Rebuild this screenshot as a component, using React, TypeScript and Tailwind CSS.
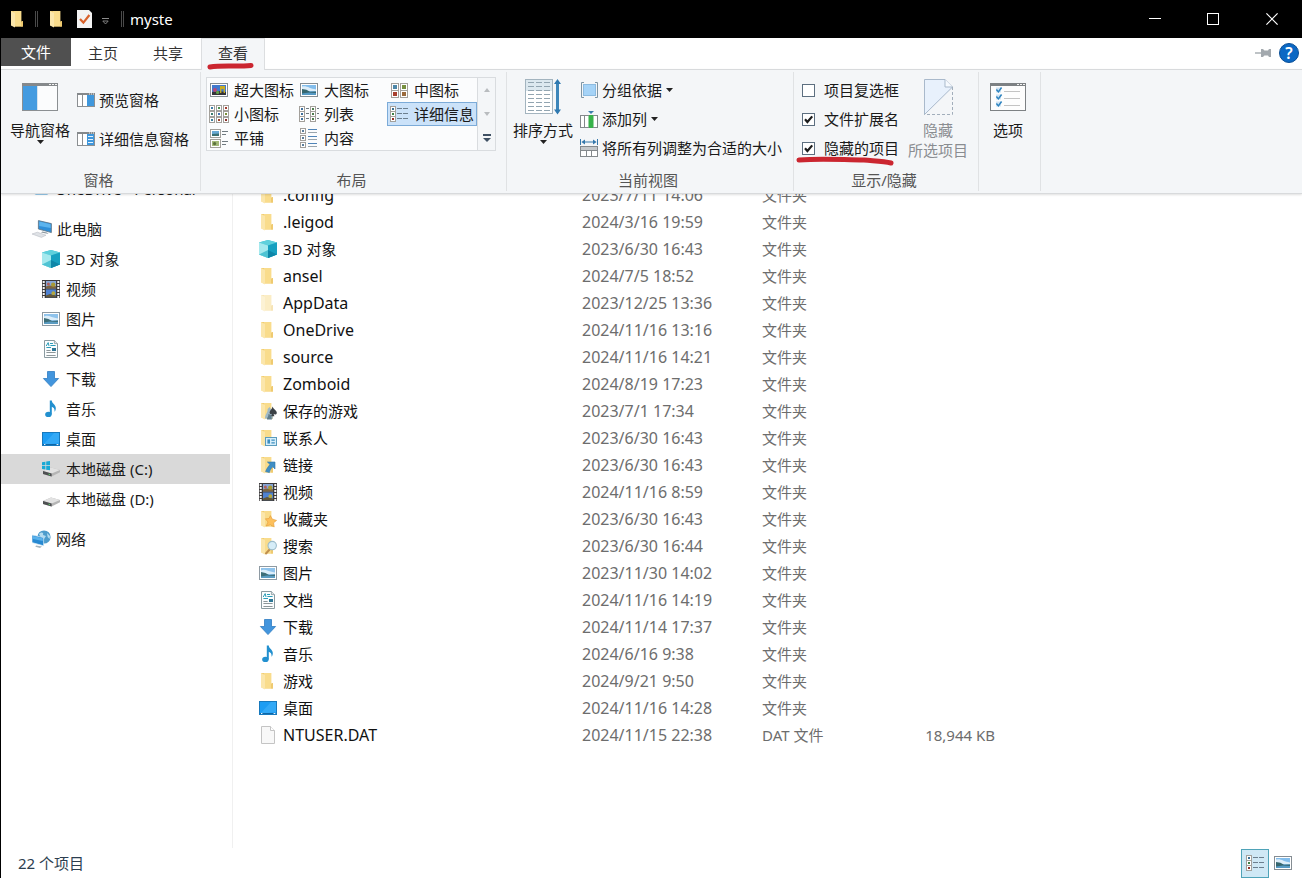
import type { ReactNode } from "react";

type IconProps = { className?: string };

const Svg = ({ w = 18, h = 18, box, className = "", children }: { w?: number; h?: number; box?: string; className?: string; children: ReactNode }) => (
  <svg aria-hidden="true" width={w} height={h} viewBox={box ?? `0 0 ${w} ${h}`} className={`shrink-0 ${className}`}>
    {children}
  </svg>
);

/* ---------- folder and file icons ---------- */

const FolderShape = () => (
  <>
    <path d="M2 1H12V12.5L14 11V16.4H5L2 15Z" fill="#f1cd72" />
    <path d="M5 1H12.4V16.4H5Z" fill="#f9dc8c" />
    <path d="M2 1L6 3V17.6L2 15.4Z" fill="#fbe6ab" />
    <path d="M12 11.5L14 11V16.4H12Z" fill="#efca70" />
  </>
);

const FolderIcon = ({ className }: IconProps) => (
  <Svg className={className}><FolderShape /></Svg>
);

const SavedGamesIcon = () => (
  <Svg>
    <FolderShape />
    <path d="M6 16.6C6 12 9 11 8.6 7L10.6 5L13 9C12.4 11 14 13 14 16.6Z" fill="#9fb9c5" />
    <path d="M8 17.4C8 15 9.6 15 9.4 12L12 13L13 17.4Z" fill="#5f7c8b" />
    <path d="M13.6 4.6C14 7 18 8.6 17.8 11C17.6 12.8 15.4 13 14.6 11.8L15.4 14.2H12L13 11.8C12 12.6 10.6 12 10.6 10.6C10.6 8.6 13.2 7 13.6 4.6Z" fill="#3b4146" />
  </Svg>
);

const ContactsIcon = () => (
  <Svg>
    <FolderShape />
    <rect x="6.5" y="8.5" width="11" height="8" fill="#d6eefa" stroke="#5b9cbd" />
    <rect x="8.4" y="10.4" width="2.6" height="4.2" fill="#3f8fc0" />
    <path d="M12.4 11.2H15.8M12.4 13.8H15.8" stroke="#3f8fc0" strokeWidth="1.2" />
  </Svg>
);

const LinksIcon = () => (
  <Svg>
    <FolderShape />
    <path d="M8.4 6H16V13L13.8 10.8C12 12.4 11 14 10.4 16.6L6.6 15.6C7.6 12.8 9.2 10.4 11 8.6Z" fill="#3f8ec4" stroke="#2d77aa" strokeWidth=".6" />
  </Svg>
);

const FavoritesIcon = () => (
  <Svg>
    <FolderShape />
    <path d="M11.4 5.6L13.2 9L17.6 10.4L14.6 12.8L15.2 17L11.4 14.8L7.2 16L9 12L6.4 8.8L10 8.6Z" fill="#fdc05c" stroke="#e39a38" strokeWidth=".6" />
  </Svg>
);

const SearchFolderIcon = () => (
  <Svg>
    <FolderShape />
    <path d="M11 12L7 16.5" stroke="#c08f4d" strokeWidth="2" strokeLinecap="round" />
    <circle cx="13.2" cy="8.6" r="4.2" fill="#d6edf8" stroke="#9bbccb" strokeWidth="1.1" />
  </Svg>
);

const CubeIcon = () => (
  <Svg>
    <path d="M9 0L18 2.4V14.6L9 18L0 14.6V2.4Z" fill="#36bcd0" />
    <path d="M0 2.4L9 0L18 2.4L9 5.6Z" fill="#5fd0dc" />
    <path d="M0 2.4L9 5.6V18L0 14.6Z" fill="#a5e9ee" />
    <path d="M0 14.6L9 10V18Z" fill="#4fc3d3" />
    <path d="M9 5.6L18 2.4V14.6L9 18Z" fill="#17a0c0" />
    <path d="M9 10L18 14.6L9 18Z" fill="#0f86a8" />
  </Svg>
);

const FilmIcon = () => (
  <Svg>
    <rect width="18" height="18" fill="#3c3a3c" />
    <rect x="4" y="1" width="10" height="7.4" fill="#86a5d6" />
    <rect x="4" y="9.4" width="10" height="7.8" fill="#4f82d2" />
    <path d="M4 6.4L7 5.4L14 6.2V8.4H4Z" fill="#7d6540" />
    <circle cx="11.2" cy="4.6" r="2.2" fill="#a99b35" />
    <circle cx="6.4" cy="4" r="1.5" fill="#b3605a" />
    <path d="M4 15.4L8 14L14 15.4V17.2H4Z" fill="#61573a" />
    <circle cx="11.4" cy="13.2" r="1.9" fill="#b5a83e" />
    <path d="M1.7 1V18M16.3 1V18" stroke="#f5f5f5" strokeWidth="2" strokeDasharray="2 1" />
  </Svg>
);

const PictureIcon = () => (
  <Svg>
    <rect x=".5" y="2.5" width="17" height="13" fill="#fff" stroke="#8e9aa3" />
    <rect x="2" y="4" width="14" height="10" fill="#8fc3ec" />
    <path d="M2 6.4C6 4.4 10 8 16 8.4V10H2Z" fill="#dceefa" />
    <path d="M2 8L6.4 9L10 11L16 10.4V14H2Z" fill="#3d6e78" />
    <path d="M2 12.6L8 11.6L16 12V14H2Z" fill="#5b9cc2" />
  </Svg>
);

const DocumentIcon = () => (
  <Svg>
    <path d="M2.5 .5H12.4L15.5 3.6V17.5H2.5Z" fill="#fbfdfe" stroke="#8a9aa0" />
    <path d="M12.4 .5V3.6H15.5" fill="#dfe5e8" stroke="#8a9aa0" strokeWidth=".8" />
    <path d="M4.2 6L6.2 2.6L7 6M8 3.5H11M8.4 5.5H13.6M4.4 7.5H9" stroke="#2b9db8" fill="none" />
    <path d="M4.4 10.5H8.6M4.4 12.5H13.6M4.4 15.5H13.6" stroke="#8d9699" />
    <rect x="10" y="8" width="4" height="3" fill="#2f7796" />
  </Svg>
);

const DownloadIcon = () => (
  <Svg>
    <path d="M5.5 1.5H12.5V8.5H16.6L9 16.6L1.4 8.5H5.5Z" fill="#4295dd" stroke="#2f7cc1" strokeWidth=".8" />
  </Svg>
);

const MusicIcon = () => (
  <Svg>
    <ellipse cx="6.4" cy="14.4" rx="3.2" ry="2.6" fill="#2290cf" />
    <path d="M7.8 0.6H9.8C10 4 14.2 4.6 13.8 8.8C13.6 10.2 13.2 11 12.6 11.8C12.8 8.6 11.6 7.6 9.8 6.8V14.4H7.8Z" fill="#2290cf" />
  </Svg>
);

const DesktopIcon = () => (
  <Svg>
    <rect x=".5" y="2.5" width="17" height="13" fill="#1d9df3" stroke="#1779bd" />
    <path d="M1 15L12 3H17V13Z" fill="#42b1f8" opacity=".6" />
    <path d="M1 14.5H17" stroke="#0e66a5" />
    <path d="M2 14.5H3.4M14.6 14.5H16.4" stroke="#e3f3ff" />
  </Svg>
);

const FileIcon = () => (
  <Svg>
    <path d="M2.5 .5H11.5L15.5 4.5V17.5H2.5Z" fill="#f8f8f8" stroke="#c4c4c4" />
    <path d="M11.5 .5V4.5H15.5" fill="#fff" stroke="#c4c4c4" />
  </Svg>
);

const ComputerIcon = () => (
  <Svg w={20}>
    <path d="M6.4 .6L19.4 3.6V12.6L6.4 9Z" fill="#2f8fd8" stroke="#5d7180" strokeWidth=".8" />
    <path d="M7.2 1.6L18.6 4.2V8L7.2 6Z" fill="#5cb4ee" />
    <path d="M10.4 11.4L15 12.6L16.6 14L9 12.6Z" fill="#8f9aa2" />
    <path d="M0 14L5.4 12.2L14 15.2L9.4 17.4Z" fill="#dfe2e6" stroke="#b0b5bc" strokeWidth=".5" />
  </Svg>
);

const DriveShape = () => (
  <>
    <path d="M1 11L9 7.6L18 10V12.2L9.6 16.6L1 14Z" fill="#b5b5b5" />
    <path d="M1 11L9 7.6L18 10L9.6 13.4Z" fill="#e2e2e2" />
    <path d="M1 11L9.6 13.4V16.6L1 14Z" fill="#4e5052" />
    <path d="M6.6 14.2L8 14.6" stroke="#5bd66b" />
  </>
);

const DriveIcon = () => <Svg><DriveShape /></Svg>;

const SystemDriveIcon = () => (
  <Svg>
    <DriveShape />
    <path d="M0 2.2L3.4 1.7V5.2H0ZM4.2 1.6L8 1V5.2H4.2ZM0 6H3.4V9.6L0 9.1ZM4.2 6H8V10.2L4.2 9.7Z" fill="#19a9d5" />
  </Svg>
);

const NetworkIcon = () => (
  <Svg w={19}>
    <circle cx="12" cy="7" r="6.6" fill="#4d9ccc" />
    <path d="M7 4C10 1 12 3 11 5L14 6L12 9L9 8ZM15 3L18 6L17.6 9L15.6 7Z" fill="#b4dcf0" />
    <path d="M0 5L11.6 7.6V15.8L0 12.6Z" fill="#2789d2" stroke="#d9edf8" strokeWidth=".7" />
    <path d="M1 6L10.8 8.2V11L1 9Z" fill="#59b2ec" />
    <path d="M4 15.4L10 16.6L8 18L3.4 16.8Z" fill="#a6b5bd" />
  </Svg>
);

const CloudIcon = () => (
  <Svg>
    <path d="M4 14.5A4 4 0 0 1 4.4 6.6A5.4 5.4 0 0 1 14.4 6.8A3.9 3.9 0 0 1 15 14.5Z" fill="#2f93d6" />
  </Svg>
);

/* ---------- ribbon icons ---------- */

const NavPaneIcon = () => (
  <Svg w={36} h={28}>
    <rect x=".5" y=".5" width="35" height="27" fill="#fbfcfd" stroke="#8b8f92" />
    <rect width="36" height="3" fill="#85898c" />
    <path d="M27 1.5H29M30 1.5H32M33 1.5H35" stroke="#f4f4f4" />
    <rect x="1" y="3" width="14" height="24" fill="#449be0" />
    <path d="M15.5 3V27" stroke="#d7e4ee" />
  </Svg>
);

const PreviewPaneIcon = ({ lines = false }: { lines?: boolean }) => (
  <Svg w={18} h={14}>
    <rect x=".5" y=".5" width="17" height="13" fill="#fff" stroke="#8b8f92" />
    <rect width="18" height="2" fill="#85898c" />
    <path d="M12 1H13M14 1H15M16 1H17" stroke="#f4f4f4" />
    <path d="M5.5 2V13" stroke="#8b8f92" />
    <rect x="10" y="2" width="7" height="11" fill="#3f97dc" />
    {lines && <path d="M11 4.5H16M11 7.5H16M11 10.5H16" stroke="#e6f3fd" />}
  </Svg>
);

const ExtraLargeIcon = () => (
  <Svg w={18} h={14}>
    <rect x=".5" y=".5" width="17" height="13" fill="#fff" stroke="#858d93" />
    <rect x="2" y="2" width="14" height="10" fill="#4179cd" />
    <path d="M2 9L8 8L16 9V12H2Z" fill="#34343a" />
    <path d="M10 3H15V10H13.6V6H11.4V10H10Z" fill="#c9ad25" />
    <circle cx="5" cy="7" r="2" fill="#b64a78" />
    <circle cx="7.6" cy="9.4" r="1.6" fill="#61a349" />
  </Svg>
);

const LargeIcon = () => (
  <Svg w={18} h={14}>
    <rect x=".5" y=".5" width="17" height="13" fill="#fff" stroke="#858d93" />
    <rect x="2" y="2" width="14" height="10" fill="#82bdec" />
    <path d="M2 3.6C7 2.4 10 6 16 6.4V8H2Z" fill="#dcedf9" />
    <path d="M2 6L6.4 6.8L10 8.8L16 8.4V12H2Z" fill="#36666e" />
    <path d="M2 10.4L9 9.4L16 10V12H2Z" fill="#5599c4" />
  </Svg>
);

const Tile = ({ x, y, s, tone }: { x: number; y: number; s: number; tone: string }) => {
  const inner = s > 7 ? 4 : 2;
  const inset = Math.floor((s - inner) / 2);
  return (
    <>
      <rect x={x + 0.5} y={y + 0.5} width={s - 1} height={s - 1} fill="#fff" stroke="#a3a09b" />
      <rect x={x + inset} y={y + inset} width={inner} height={inner} fill={tone} />
    </>
  );
};

const MediumIcon = () => (
  <Svg w={17} h={15}>
    <Tile x={0} y={0} s={8} tone="#4e87a8" />
    <Tile x={9} y={0} s={8} tone="#77903e" />
    <Tile x={0} y={7} s={8} tone="#a83f2e" />
    <Tile x={9} y={7} s={8} tone="#9a6a3c" />
  </Svg>
);

const tones = ["#3e7da8", "#4b8f4d", "#a13c2f", "#3b7c6d", "#3f6fae", "#7b8f38", "#3a7f9c", "#a2482e", "#8a2f2a"];

const SmallIcon = () => (
  <Svg w={20} h={18}>
    {tones.map((tone, i) => (
      <Tile key={i} x={(i % 3) * 7} y={Math.floor(i / 3) * 6} s={6} tone={tone} />
    ))}
  </Svg>
);

const ListIcon = () => (
  <Svg w={20} h={16}>
    {[0, 5, 10].map((y) => (
      <g key={y}>
        <Tile x={0} y={y} s={6} tone="#3f6f9c" />
        <Tile x={11} y={y} s={6} tone="#4f7d4f" />
        <path d={`M7 ${y + 2.5}H10M18 ${y + 2.5}H20`} stroke="#707a80" />
      </g>
    ))}
  </Svg>
);

const DetailsIcon = () => (
  <Svg w={18} h={16}>
    {[0, 5, 10].map((y, i) => (
      <g key={y}>
        <Tile x={0} y={y} s={6} tone={["#3a6f94", "#3f8046", "#962f28"][i]} />
        <path d={`M7 ${y + 2.5}H12M13 ${y + 2.5}H18`} stroke="#6c7f8e" />
      </g>
    ))}
  </Svg>
);

const TilesIcon = () => (
  <Svg w={18} h={19}>
    <rect x=".5" y=".5" width="10" height="8" fill="#fff" stroke="#a3a09b" />
    <rect x="2" y="2" width="7" height="5" fill="#6aa9d4" />
    <path d="M2 5L9 4.4V7H2Z" fill="#3b6f72" />
    <rect x=".5" y="10.5" width="10" height="8" fill="#fff" stroke="#a3a09b" />
    <rect x="2" y="12" width="7" height="5" fill="#a3b878" />
    <circle cx="4.6" cy="14.6" r="1.6" fill="#596f3a" />
    <path d="M12 2.5H18M12 5.5H16M12 12.5H18M12 15.5H16" stroke="#707a80" />
  </Svg>
);

const ContentIcon = () => (
  <Svg w={18} h={20}>
    {[0, 7, 14].map((y) => (
      <g key={y}>
        <Tile x={0} y={y} s={6} tone="#5b7d9a" />
        <path d={`M8 ${y + 1.5}H17`} stroke="#4f84b8" />
        <path d={`M8 ${y + 4.5}H17`} stroke="#9aa5ac" />
      </g>
    ))}
  </Svg>
);

const SortIcon = () => (
  <Svg w={36} h={36}>
    <rect x=".5" y=".5" width="27" height="34" fill="#fff" stroke="#a3b4bf" />
    <rect x="1" y="1" width="26" height="11" fill="#dce8ef" />
    {[4, 8, 12, 16, 20, 24, 28, 32].map((y) => (
      <path key={y} d={`M3 ${y - 0.5}H9M11 ${y - 0.5}H17M19 ${y - 0.5}H25`} stroke="#92a5b1" />
    ))}
    <path d="M32.5 3V32" stroke="#3d86ba" strokeWidth="3" />
    <path d="M32.5 0L36 5H29ZM32.5 35.4L36 30.4H29Z" fill="#2f79b0" />
  </Svg>
);

const GroupByIcon = () => (
  <Svg w={17} h={16}>
    <path d="M3 .5H.5V15.5H3M14 .5H16.5V15.5H14" fill="none" stroke="#7f95a3" />
    <rect x="2.5" y="2.5" width="12" height="11" fill="#a5d3f7" stroke="#8cbbe0" />
  </Svg>
);

const AddColumnIcon = () => (
  <Svg w={18} h={17}>
    <path d="M8 0H14L11 3Z" fill="#3b7cab" />
    <rect x=".5" y="4.5" width="17" height="12" fill="#fff" stroke="#84898c" />
    <path d="M4.5 5V16" stroke="#84898c" />
    <rect x="9" y="4" width="4" height="13" fill="#37b24a" />
    <path d="M8.5 5V16M13.5 5V16" stroke="#9ad6a3" />
  </Svg>
);

const FitColumnsIcon = () => (
  <Svg w={18} h={18}>
    <path d="M.5 0V6M17.5 0V6M3 3H15" stroke="#3578ab" />
    <path d="M5 .6L1.4 3L5 5.4ZM13 .6L16.6 3L13 5.4Z" fill="#3578ab" />
    <rect x=".5" y="7.5" width="17" height="10" fill="#fff" stroke="#84898c" />
    <rect x="1" y="8" width="16" height="3" fill="#c3c7ca" />
    <path d="M6.5 11V17M11.5 11V17M1 11.5H17" stroke="#84898c" />
  </Svg>
);

const HideIcon = () => (
  <Svg w={29} h={36}>
    <path d="M.5 35.5V.5H21L28.5 8Z" fill="#e8f1fc" />
    <path d="M.5 35.5V.5H21L28.5 8L.5 35.5" fill="none" stroke="#a9b9cb" />
    <path d="M21 .5V8H28.5" fill="#f6fafe" stroke="#a9b9cb" />
    <path d="M28.5 8V35.5H.5" fill="none" stroke="#a2aebb" strokeDasharray="3 2" />
  </Svg>
);

const OptionsIcon = () => (
  <Svg w={36} h={28}>
    <rect x=".5" y=".5" width="35" height="27" fill="#fdfdfd" stroke="#7d8184" />
    <rect width="36" height="3" fill="#7d8184" />
    <path d="M27 1.5H29M30 1.5H32M33 1.5H35" stroke="#f4f4f4" />
    {[4.5, 11.5, 18.5].map((y) => (
      <g key={y}>
        <rect x="6" y={y} width="5" height="5" fill="#cfe4f4" />
        <path d={`M6.4 ${y + 2}L8.4 ${y + 4.4}L11.6 ${y}`} fill="none" stroke="#2d83bf" strokeWidth="1.5" />
        <path d={`M14 ${y + 4}H30`} stroke="#c3c3c3" />
      </g>
    ))}
  </Svg>
);

const Caret = () => (
  <Svg w={7} h={4}><path d="M0 0H7L3.5 4Z" fill="#222" /></Svg>
);

/* ---------- ribbon ---------- */

function Group({ label, className, children }: { label: string; className: string; children: ReactNode }) {
  return (
    <section aria-label={label || "选项"} className={`flex shrink-0 flex-col border-r border-[#e0e2e4] ${className}`}>
      <div className="flex flex-1 items-start">{children}</div>
      <div className="h-[21px] pr-1 text-center leading-5 text-[#555]">{label}</div>
    </section>
  );
}

function SmallButton({ icon, label, caret = false }: { icon: ReactNode; label: string; caret?: boolean }) {
  return (
    <button className="flex h-5 items-center gap-1 whitespace-nowrap">
      <span className="flex w-[18px] justify-center">{icon}</span>
      {label}
      {caret && <Caret />}
    </button>
  );
}

function BigButton({ icon, label, caret = false, className = "" }: { icon: ReactNode; label: string; caret?: boolean; className?: string }) {
  return (
    <button className={`flex shrink-0 flex-col items-center whitespace-nowrap ${className}`}>
      <span className="flex h-12 items-center justify-center pt-0.5">{icon}</span>
      <span className="leading-5">{label}</span>
      {caret && <Caret />}
    </button>
  );
}

function Check({ label, checked = false }: { label: string; checked?: boolean }) {
  return (
    <label className="flex h-5 items-center gap-[9px] whitespace-nowrap">
      <span className="grid">
        <input type="checkbox" defaultChecked={checked} className="peer col-start-1 row-start-1 size-[13px] appearance-none border border-[#5d6f80] bg-white" />
        <svg aria-hidden="true" viewBox="0 0 13 13" className="pointer-events-none col-start-1 row-start-1 hidden size-[13px] peer-checked:block">
          <path d="M3 6.2L5.4 9L10.2 3.4" fill="none" stroke="#1c1c1c" strokeWidth="2.2" />
        </svg>
      </span>
      {label}
    </label>
  );
}

const layouts = [
  { label: "超大图标", icon: <ExtraLargeIcon /> },
  { label: "大图标", icon: <LargeIcon /> },
  { label: "中图标", icon: <MediumIcon /> },
  { label: "小图标", icon: <SmallIcon /> },
  { label: "列表", icon: <ListIcon /> },
  { label: "详细信息", icon: <DetailsIcon />, selected: true },
  { label: "平铺", icon: <TilesIcon /> },
  { label: "内容", icon: <ContentIcon /> },
];

function Ribbon() {
  return (
    <div className="relative z-10 flex h-[125px] shrink-0 border-y border-[#d8dadc] bg-[#f4f6f8] pt-0.5 pb-0.5 shadow-[0_1px_2px_rgba(0,0,0,0.12)]">
      <Group label="窗格" className="w-[200px]">
        <BigButton icon={<NavPaneIcon />} label="导航窗格" caret className="ml-[9px]" />
        <div className="ml-[7px] flex flex-col gap-[19px] pt-[18px]">
          <SmallButton icon={<PreviewPaneIcon />} label="预览窗格" />
          <SmallButton icon={<PreviewPaneIcon lines />} label="详细信息窗格" />
        </div>
      </Group>

      <Group label="布局" className="w-[306px]">
        <div className="ml-[5px] mt-[5px] flex h-[74px]">
          <div className="grid grid-cols-3 grid-rows-3 border border-[#d9dcdf] bg-[#fbfcfd]">
            {layouts.map((l) => (
              <button
                key={l.label}
                className={`flex w-[90px] items-center gap-[5px] border pl-px whitespace-nowrap ${l.selected ? "border-[#7cabd8] bg-[#cbe2f9]" : "border-transparent"}`}
              >
                <span className="flex w-5 justify-center">{l.icon}</span>
                {l.label}
              </button>
            ))}
          </div>
          <div className="flex w-[18px] flex-col border border-l-0 border-[#d9dcdf]">
            <button aria-label="上一行" className="flex flex-1 items-center justify-center">
              <Svg w={6} h={4}><path d="M0 4H6L3 0Z" fill="#b9bcbf" /></Svg>
            </button>
            <button aria-label="下一行" className="flex flex-1 items-center justify-center">
              <Svg w={6} h={4}><path d="M0 0H6L3 4Z" fill="#b9bcbf" /></Svg>
            </button>
            <button aria-label="更多布局" className="flex flex-1 items-center justify-center">
              <Svg w={8} h={8}><path d="M0 1H8" stroke="#3f5063" strokeWidth="2" /><path d="M0 4H8L4 8Z" fill="#3f5063" /></Svg>
            </button>
          </div>
        </div>
      </Group>

      <Group label="当前视图" className="w-[287px]">
        <BigButton icon={<SortIcon />} label="排序方式" caret className="ml-1.5" />
        <div className="ml-[7px] flex flex-col gap-[9px] pt-2">
          <SmallButton icon={<GroupByIcon />} label="分组依据" caret />
          <SmallButton icon={<AddColumnIcon />} label="添加列" caret />
          <SmallButton icon={<FitColumnsIcon />} label="将所有列调整为合适的大小" />
        </div>
      </Group>

      <Group label="显示/隐藏" className="w-[185px]">
        <div className="relative ml-2 flex flex-col gap-[9px] pt-2">
          <Check label="项目复选框" />
          <Check label="文件扩展名" checked />
          <Check label="隐藏的项目" checked />
          <svg aria-hidden="true" width="100" height="10" viewBox="0 0 100 10" className="absolute top-[84px] -left-1.5">
            <path d="M3 4C28 2 48 4 68 4C80 5 88 5 95 7" fill="none" stroke="#cb2630" strokeWidth="5" strokeLinecap="round" />
          </svg>
        </div>
        <button disabled className="ml-[9px] flex flex-col items-center whitespace-nowrap text-[#8a8d91]">
          <span className="flex h-12 items-center pt-0.5"><HideIcon /></span>
          <span className="leading-5">隐藏</span>
          <span className="leading-5">所选项目</span>
        </button>
      </Group>

      <Group label="" className="w-[62px]">
        <BigButton icon={<OptionsIcon />} label="选项" className="ml-[11px]" />
      </Group>
    </div>
  );
}

/* ---------- navigation tree ---------- */

const drives = [
  { label: "3D 对象", icon: <CubeIcon /> },
  { label: "视频", icon: <FilmIcon /> },
  { label: "图片", icon: <PictureIcon /> },
  { label: "文档", icon: <DocumentIcon /> },
  { label: "下载", icon: <DownloadIcon /> },
  { label: "音乐", icon: <MusicIcon /> },
  { label: "桌面", icon: <DesktopIcon /> },
  { label: "本地磁盘 (C:)", icon: <SystemDriveIcon />, selected: true },
  { label: "本地磁盘 (D:)", icon: <DriveIcon /> },
];

function TreeItem({ icon, label, nested = false, selected = false }: { icon: ReactNode; label: string; nested?: boolean; selected?: boolean }) {
  return (
    <a href="#" className={`mr-0.5 flex h-[30px] items-center whitespace-nowrap ${nested ? "gap-1.5 pl-[41px]" : "gap-[5px] pl-[31px]"} ${selected ? "bg-[#d9d9d9]" : ""}`}>
      {icon}
      {label}
    </a>
  );
}

function Sidebar() {
  return (
    <nav aria-label="导航窗格" className="w-[232px] shrink-0 overflow-hidden border-r border-[#f0f0f0]">
      <div className="-mt-5 flex flex-col gap-2.5">
        <TreeItem icon={<CloudIcon />} label="OneDrive - Personal" />
        <div>
          <TreeItem icon={<ComputerIcon />} label="此电脑" />
          {drives.map((d) => (
            <TreeItem key={d.label} nested {...d} />
          ))}
        </div>
        <TreeItem icon={<NetworkIcon />} label="网络" />
      </div>
    </nav>
  );
}

/* ---------- file list ---------- */

type Row = { name: string; date: string; icon: ReactNode; type?: string; size?: string };

const rows: Row[] = [
  { name: ".config", date: "2023/7/11 14:06", icon: <FolderIcon /> },
  { name: ".leigod", date: "2024/3/16 19:59", icon: <FolderIcon /> },
  { name: "3D 对象", date: "2023/6/30 16:43", icon: <CubeIcon /> },
  { name: "ansel", date: "2024/7/5 18:52", icon: <FolderIcon /> },
  { name: "AppData", date: "2023/12/25 13:36", icon: <FolderIcon className="opacity-50" /> },
  { name: "OneDrive", date: "2024/11/16 13:16", icon: <FolderIcon /> },
  { name: "source", date: "2024/11/16 14:21", icon: <FolderIcon /> },
  { name: "Zomboid", date: "2024/8/19 17:23", icon: <FolderIcon /> },
  { name: "保存的游戏", date: "2023/7/1 17:34", icon: <SavedGamesIcon /> },
  { name: "联系人", date: "2023/6/30 16:43", icon: <ContactsIcon /> },
  { name: "链接", date: "2023/6/30 16:43", icon: <LinksIcon /> },
  { name: "视频", date: "2024/11/16 8:59", icon: <FilmIcon /> },
  { name: "收藏夹", date: "2023/6/30 16:43", icon: <FavoritesIcon /> },
  { name: "搜索", date: "2023/6/30 16:44", icon: <SearchFolderIcon /> },
  { name: "图片", date: "2023/11/30 14:02", icon: <PictureIcon /> },
  { name: "文档", date: "2024/11/16 14:19", icon: <DocumentIcon /> },
  { name: "下载", date: "2024/11/14 17:37", icon: <DownloadIcon /> },
  { name: "音乐", date: "2024/6/16 9:38", icon: <MusicIcon /> },
  { name: "游戏", date: "2024/9/21 9:50", icon: <FolderIcon /> },
  { name: "桌面", date: "2024/11/16 14:28", icon: <DesktopIcon /> },
  { name: "NTUSER.DAT", date: "2024/11/15 22:38", icon: <FileIcon />, type: "DAT 文件", size: "18,944 KB" },
];

const isLatin = (text: string) => /^[\x20-\x7e]+$/.test(text);

function FileList() {
  return (
    <main className="min-w-0 flex-1 overflow-hidden">
      <table className="-mt-[13px] w-[762px] table-fixed border-collapse text-[#6d6d6d]">
        <colgroup>
          <col className="w-[349px]" />
          <col className="w-[180px]" />
          <col className="w-[110px]" />
          <col />
        </colgroup>
        <tbody>
          {rows.map((r) => (
            <tr key={r.name} className="h-[27px]">
              <td className="p-0 pl-[26px]">
                <div className={`flex items-center gap-1.5 text-[#111] ${isLatin(r.name) ? "text-[16px]/5" : ""}`}>
                  {r.icon}
                  {r.name}
                </div>
              </td>
              <td className="p-0 text-[16px]/5">{r.date}</td>
              <td className="p-0">{r.type ?? "文件夹"}</td>
              <td className="p-0 text-right">{r.size}</td>
            </tr>
          ))}
        </tbody>
      </table>
    </main>
  );
}

/* ---------- window chrome ---------- */

function TitleBar() {
  return (
    <header className="flex h-[38px] shrink-0 items-center bg-black pr-px pl-2 text-white">
      <FolderIcon />
      <span className="ml-2 h-4 w-[3px] border-x border-[#4a4a4a]" />
      <FolderIcon className="ml-2.5" />
      <Svg w={15} h={18} className="ml-[11px]">
        <path d="M0 0H12L15 3V18H0Z" fill="#f3f3f3" />
        <path d="M3 9L6.4 12.6L12.4 5" fill="none" stroke="#d9622b" strokeWidth="2.2" />
      </Svg>
      <button aria-label="自定义快速访问工具栏" className="ml-2.5 pt-1">
        <Svg w={7} h={7}><path d="M0 .5H7" stroke="#8b8b8b" /><path d="M.8 3H6.2L3.5 6Z" fill="none" stroke="#8b8b8b" strokeWidth=".9" /></Svg>
      </button>
      <span className="ml-3 h-4 w-[3px] border-x border-[#4a4a4a]" />
      <h1 className="ml-1.5 text-[15px]/5">myste</h1>
      <div className="ml-auto flex h-full">
        <button aria-label="最小化" className="flex w-[58px] items-center justify-center"><Svg w={12} h={12}><path d="M0 5.5H12" stroke="#fff" /></Svg></button>
        <button aria-label="最大化" className="flex w-[58px] items-center justify-center"><Svg w={12} h={12}><rect x=".5" y=".5" width="11" height="11" fill="none" stroke="#fff" /></Svg></button>
        <button aria-label="关闭" className="flex w-[59px] items-center justify-center"><Svg w={12} h={12}><path d="M.4 .4L11.6 11.6M11.6 .4L.4 11.6" stroke="#fff" strokeWidth="1.2" /></Svg></button>
      </div>
    </header>
  );
}

function Tabs() {
  return (
    <div className="flex h-[31px] shrink-0 items-start bg-white">
      <button className="h-7 w-[70px] bg-[#505050] text-white">文件</button>
      <div className="flex gap-px text-[#333]">
        <button className="h-[31px] w-16 pb-0.5">主页</button>
        <button className="h-[31px] w-16 pb-0.5">共享</button>
        <div className="relative z-20">
          <button className="h-8 w-16 border-x border-t border-[#dcdee0] bg-[#f4f6f8] pb-[3px]">查看</button>
          <svg aria-hidden="true" width="50" height="8" viewBox="0 0 50 8" className="absolute top-6 left-1.5">
            <path d="M3 5C16 3 30 5 44 3.4" fill="none" stroke="#cb2630" strokeWidth="5" strokeLinecap="round" />
          </svg>
        </div>
      </div>
      <div className="ml-auto flex h-[30px] items-center gap-2 pr-[3px]">
        <button aria-label="固定功能区">
          <Svg w={16} h={10}>
            <path d="M0 5H6" stroke="#a3a9ae" strokeWidth="1.4" />
            <path d="M6 1H8L9.4 2.6H13L14 1H16V9H14L13 7.4H9.4L8 9H6Z" fill="#a3a9ae" />
          </Svg>
        </button>
        <button aria-label="帮助" className="flex size-5 items-center justify-center rounded-full border border-[#0a4f97] bg-[#0b68c4] text-base font-semibold leading-none text-white">?</button>
      </div>
    </div>
  );
}

function StatusBar() {
  return (
    <footer className="flex h-[30px] shrink-0 items-center pl-[17px] text-[#2c3e50]">
      <span>22 个项目</span>
      <div className="ml-auto flex h-full items-center gap-[5px] pr-2.5">
        <button aria-label="详细信息视图" className="flex h-[29px] w-7 items-center justify-center border border-[#4fa3b8] bg-[#cfe8f5]"><DetailsIcon /></button>
        <button aria-label="大图标视图"><LargeIcon /></button>
      </div>
    </footer>
  );
}

export default function App() {
  return (
    <div className="flex h-screen flex-col overflow-hidden border-l border-black bg-white text-[15px] leading-5 text-[#1a1a1a] [font-family:'Noto_Sans','Noto_Sans_CJK_SC',sans-serif]">
      <TitleBar />
      <Tabs />
      <Ribbon />
      <div className="flex min-h-0 flex-1">
        <Sidebar />
        <FileList />
      </div>
      <StatusBar />
    </div>
  );
}
